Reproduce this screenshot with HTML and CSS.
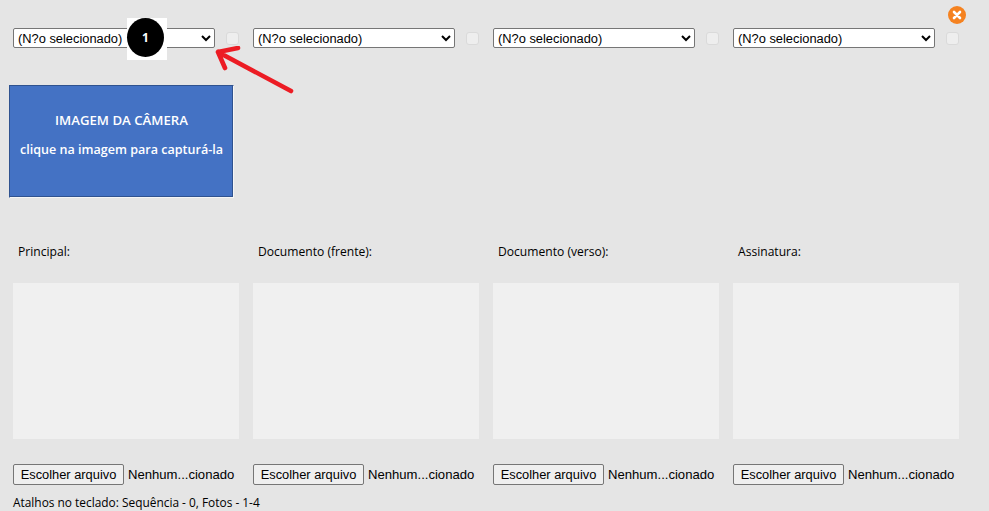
FILE: index.html
```html
<!DOCTYPE html>
<html lang="pt">
<head>
<meta charset="utf-8">
<title>Captura de fotos</title>
<link rel="stylesheet" href="styles.css">
</head>
<body>
<main class="app">
  <button class="close" aria-label="Fechar">
    <svg viewBox="0 0 18 18" width="18" height="18"><circle cx="9" cy="9" r="9" fill="#f58220"/><path d="M6 6l6 6M12 6l-6 6" stroke="#fff" stroke-width="2.6" stroke-linecap="round"/></svg>
  </button>

  <section class="selectors">
    <div class="selector"><select class="cam"><option>(N?o selecionado)</option></select><span class="check"></span></div>
    <div class="selector"><select class="cam"><option>(N?o selecionado)</option></select><span class="check"></span></div>
    <div class="selector"><select class="cam"><option>(N?o selecionado)</option></select><span class="check"></span></div>
    <div class="selector"><select class="cam"><option>(N?o selecionado)</option></select><span class="check"></span></div>
  </section>

  <div class="camera">
    <p class="cam-title">IMAGEM DA CÂMERA</p>
    <p class="cam-sub">clique na imagem para capturá-la</p>
  </div>

  <section class="photos">
    <div class="photo">
      <div class="label">Principal:</div>
      <div class="frame"></div>
      <div class="file"><button class="pick">Escolher arquivo</button><span class="none">Nenhum...cionado</span></div>
    </div>
    <div class="photo">
      <div class="label">Documento (frente):</div>
      <div class="frame"></div>
      <div class="file"><button class="pick">Escolher arquivo</button><span class="none">Nenhum...cionado</span></div>
    </div>
    <div class="photo">
      <div class="label">Documento (verso):</div>
      <div class="frame"></div>
      <div class="file"><button class="pick">Escolher arquivo</button><span class="none">Nenhum...cionado</span></div>
    </div>
    <div class="photo">
      <div class="label">Assinatura:</div>
      <div class="frame"></div>
      <div class="file"><button class="pick">Escolher arquivo</button><span class="none">Nenhum...cionado</span></div>
    </div>
  </section>

  <footer class="hint">Atalhos no teclado: Sequência - 0, Fotos - 1-4</footer>

  <div class="badge"><span class="dot">1</span></div>
  <svg class="arrow" viewBox="0 0 90 60" width="90" height="60"><path d="M4 6L77 45M4 6L24 2M4 6L11 22" fill="none" stroke="#ec1c24" stroke-width="4.6" stroke-linecap="round" stroke-linejoin="round"/></svg>
</main>
</body>
</html>
```

FILE: styles.css
```css
* { box-sizing: border-box; }
html, body { margin: 0; height: 100%; }
body { background: #e5e5e5; overflow: hidden; }
.app {
  position: relative;
  width: 989px;
  height: 511px;
  padding: 28px 0 0 13px;
  font-family: "Open Sans", sans-serif;
  font-size: 12.1px;
  color: #000;
}
.close {
  position: absolute;
  left: 948px;
  top: 6px;
  width: 18px;
  height: 18px;
  padding: 0;
  border: 0;
  background: none;
  display: block;
}
.close svg { display: block; }
.selectors {
  display: grid;
  grid-template-columns: repeat(4, 226px);
  column-gap: 14px;
}
.selector { display: flex; align-items: flex-start; height: 20px; }
.cam {
  width: 203px;
  height: 20px;
  padding: 0;
  margin: 0;
  font-family: "Liberation Sans", sans-serif;
  font-size: 12.85px;
  color: #000;
  background-color: #fff;
  border: 1px solid #767676;
  border-radius: 2px;
}
.check {
  width: 13px;
  height: 13px;
  margin: 4px 0 0 11px;
  background: #eee;
  border: 1px solid #dadada;
  border-radius: 3px;
}
.camera {
  width: 225px;
  height: 113px;
  margin: 37px 0 0 -4px;
  background: #4472c4;
  border: 1px solid #2f528f;
  border-right-color: #f5f5f5;
  border-bottom-color: #f5f5f5;
  color: #fff;
  font-family: "Open Sans", sans-serif;
  font-weight: 600;
  text-align: center;
  padding-top: 26px;
  box-shadow: inset -1px -1px 0 #2f528f;
}
.camera p { margin: 0 0 12px; line-height: 17px; }
.cam-title { font-size: 13.2px; }
.cam-sub { font-size: 12.55px; }
.photos {
  display: grid;
  grid-template-columns: repeat(4, 226px);
  column-gap: 14px;
  margin-top: 46px;
}
.label { height: 16px; line-height: 16px; padding-left: 5px; }
.frame { height: 156px; margin-top: 23px; background: #f0f0f0; }
.file { display: flex; align-items: center; margin-top: 25px; height: 21px; }
.pick {
  width: 111px;
  height: 21px;
  padding: 0;
  font-family: "Liberation Sans", sans-serif;
  font-size: 12.85px;
  color: #000;
  background: #efefef;
  border: 1px solid #767676;
  border-radius: 2px;
}
.none {
  margin-left: 4px;
  font-family: "Liberation Sans", sans-serif;
  font-size: 13.1px;
  white-space: nowrap;
}
.hint { margin-top: 9px; height: 16px; line-height: 16px; font-size: 11.9px; }
.badge {
  position: absolute;
  left: 127px;
  top: 18px;
  width: 40px;
  height: 42px;
  background: #fff;
}
.dot {
  width: 37px;
  height: 39px;
  border-radius: 50%;
  background: #000;
  color: #fff;
  font-weight: 700;
  font-size: 12px;
  display: flex;
  align-items: center;
  justify-content: center;
}
.arrow { position: absolute; left: 214px; top: 46px; }
```
